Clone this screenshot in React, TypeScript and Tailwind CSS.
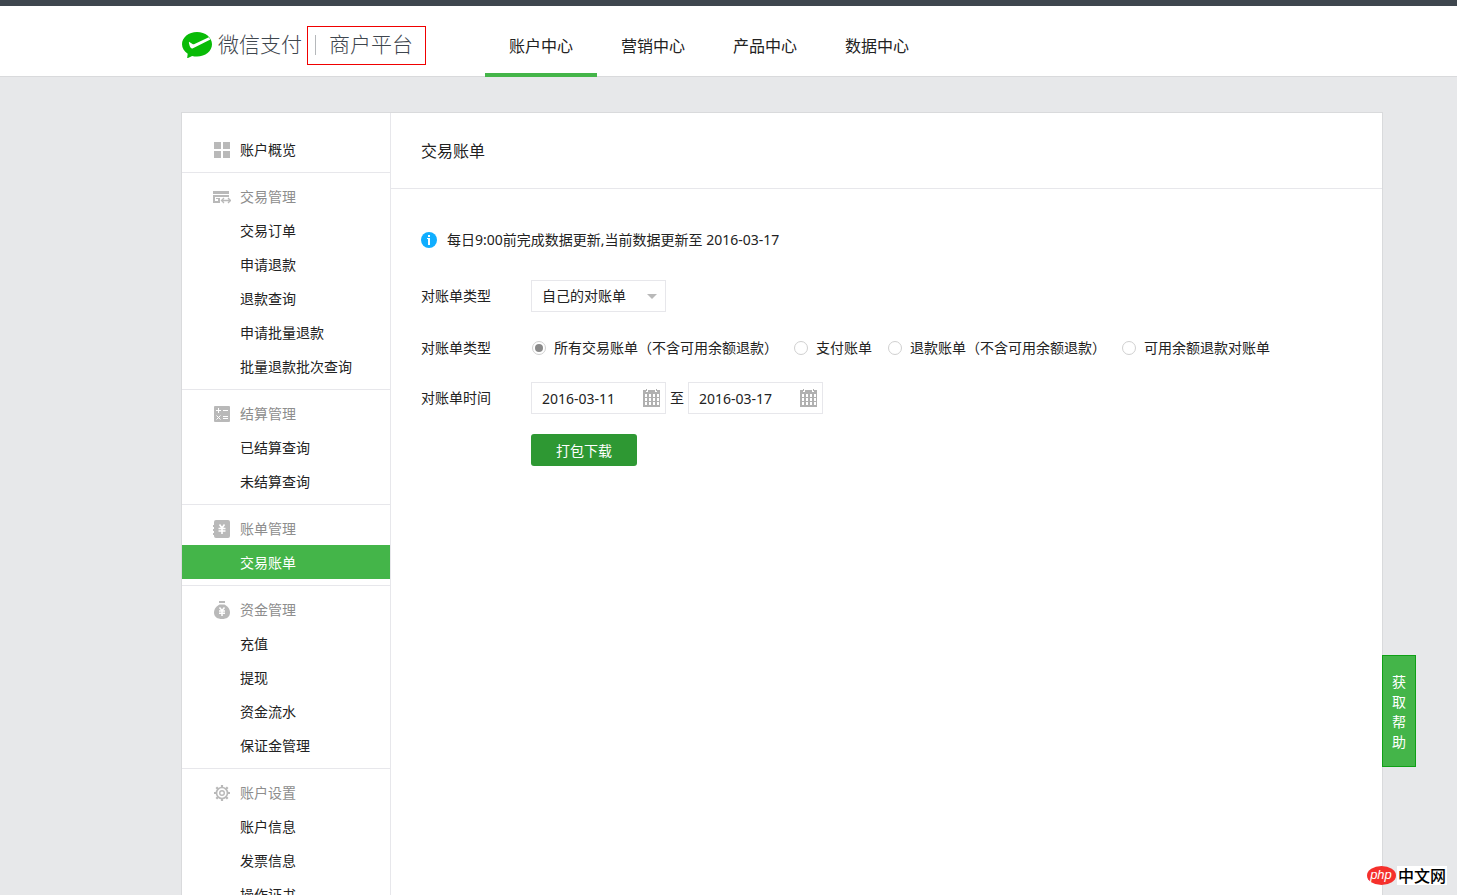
import { useState, type ReactElement } from "react";

type NavGroup = {
  title: string;
  icon: ReactElement;
  items: string[];
};

const TOP_NAV = ["账户中心", "营销中心", "产品中心", "数据中心"];

const BILL_TYPES = [
  "所有交易账单（不含可用余额退款）",
  "支付账单",
  "退款账单（不含可用余额退款）",
  "可用余额退款对账单",
];

function OverviewIcon() {
  return (
    <svg viewBox="0 0 18 18" className="size-[18px]" fill="#b9b9b9" shapeRendering="crispEdges">
      <path d="M1 1h7v7H1zM10 1h7v7h-7zM1 10h7v7H1zM10 10h7v7h-7z" />
    </svg>
  );
}

function TradeIcon() {
  return (
    <svg viewBox="0 0 18 18" className="size-[18px]" fill="#b9b9b9">
      <path d="M0 3h16v3H0zM0 7h16v2H0zM0 9h2v6H0zM2 13h5v2H2zM5 11h2v2H5zM3 10h4v1H3z" />
      <path
        d="M8.500 12.500h9M11 10l-2.500 2.500L11 15M15 10l2.500 2.500L15 15"
        fill="none"
        stroke="#b9b9b9"
        strokeWidth="1.300"
      />
    </svg>
  );
}

function SettleIcon() {
  return (
    <svg viewBox="0 0 18 18" className="size-[18px]">
      <rect x="1" y="1" width="16" height="16" rx="1" fill="#b9b9b9" />
      <path
        d="M3 5.500h5M5.500 3v5M10 5.500h5M10 11.500h5M10 13.500h5M3.500 10.500l4 4M7.500 10.500l-4 4"
        fill="none"
        stroke="#fff"
        strokeWidth="1"
      />
    </svg>
  );
}

function BillIcon() {
  return (
    <svg viewBox="0 0 18 18" className="size-[18px]">
      <path
        d="M3 0h12a2 2 0 0 1 2 2v14a2 2 0 0 1-2 2H3a2 2 0 0 1-2-2v-1H0v-2h1v-2H0V9h1V7H0V5h1V2a2 2 0 0 1 2-2z"
        fill="#b9b9b9"
      />
      <path d="M6.500 4.500 9 8l2.500-3.500M9 8v6M5.500 8.500h7M5.500 11h7" fill="none" stroke="#fff" strokeWidth="1.600" />
    </svg>
  );
}

function FundIcon() {
  return (
    <svg viewBox="0 0 18 18" className="size-[18px]">
      <path d="M6 0h6v2H6z" fill="#b9b9b9" />
      <path
        d="M6.500 3.500h5C14.500 5 17 8 17 11.500 17 16 13.500 18 9 18s-8-2-8-6.500C1 8 3.500 5 6.500 3.500z"
        fill="#b9b9b9"
      />
      <path d="M6.500 6.500 9 9.500l2.500-3M9 9.500V15M6 10h6M6 12.300h6" fill="none" stroke="#fff" strokeWidth="1.500" />
    </svg>
  );
}

function SettingsIcon() {
  return (
    <svg viewBox="0 0 18 18" className="size-[18px]" fill="none" stroke="#b9b9b9">
      <circle cx="9" cy="9" r="5.500" strokeWidth="1.700" />
      <circle cx="9" cy="9" r="2.300" strokeWidth="1.400" />
      <path
        d="M9 1v2.500M9 14.500V17M1 9h2.500M14.500 9H17M3.300 3.300l1.800 1.800M12.900 12.900l1.800 1.800M3.300 14.700l1.800-1.800M12.900 5.100l1.800-1.800"
        strokeWidth="2.200"
      />
    </svg>
  );
}

function CalendarIcon() {
  return (
    <svg
      viewBox="0 0 17 18"
      className="pointer-events-none absolute top-[7px] right-[6px] h-[18px] w-[17px]"
      shapeRendering="crispEdges"
    >
      <path d="M0 1h3v2h2V1h7v2h2V1h3v17H0z" fill="#b0b0b0" />
      <path d="M3 0h1v2H3zM13 0h1v2h-1z" fill="#b0b0b0" />
      <path
        d="M2 5h2v3H2zM6 5h2v3H6zM10 5h2v3h-2zM14 5h2v3h-2zM2 9h2v3H2zM6 9h2v3H6zM10 9h2v3h-2zM14 9h2v3h-2zM2 13h2v3H2zM6 13h2v3H6zM10 13h2v3h-2zM14 13h2v3h-2z"
        fill="#fff"
      />
    </svg>
  );
}

const NAV_GROUPS: NavGroup[] = [
  {
    title: "交易管理",
    icon: <TradeIcon />,
    items: ["交易订单", "申请退款", "退款查询", "申请批量退款", "批量退款批次查询"],
  },
  { title: "结算管理", icon: <SettleIcon />, items: ["已结算查询", "未结算查询"] },
  { title: "账单管理", icon: <BillIcon />, items: ["交易账单"] },
  { title: "资金管理", icon: <FundIcon />, items: ["充值", "提现", "资金流水", "保证金管理"] },
  { title: "账户设置", icon: <SettingsIcon />, items: ["账户信息", "发票信息", "操作证书"] },
];

function Header() {
  return (
    <header className="flex h-[77px] shrink-0 border-t-[6px] border-b border-t-[#3e464e] border-b-[#d9dadc] bg-white pl-[182px]">
      <a href="#" className="mt-5 flex h-[39px] w-[244px] shrink-0 text-[21px] leading-[34px] font-light text-[#3e464e]">
        <svg viewBox="0 0 30 26" className="mt-[6px] mr-[6px] h-[26px] w-[30px] shrink-0">
          <path
            d="M15 0c8.300 0 15 5.500 15 12.300S23.300 24.600 15 24.600c-1.700 0-3.400-.2-4.900-.7L5.600 26.200c-.3.100-.5-.1-.4-.4l.5-4C2.200 19.500 0 16.100 0 12.300 0 5.500 6.700 0 15 0z"
            fill="#09bb07"
          />
          <path
            d="M7 9.800c-.4.500.5 4.300 1.700 6 .6.900 1.500.9 2.300.5L28.400 7.400 26.800 5.200 12 12.200c-.5.200-1 .2-1.500-.1z"
            fill="#fff"
          />
        </svg>
        <span className="w-[89px] pt-px whitespace-nowrap">微信支付</span>
        <span className="flex flex-1 border border-[#f00000] pl-[7px] whitespace-nowrap">
          <i className="mt-2 mr-[13px] h-5 w-px bg-[#b5b8bb]" />
          商户平台
        </span>
      </a>
      <nav className="ml-[59px] flex">
        {TOP_NAV.map((label, index) => (
          <a
            key={label}
            href="#"
            className={[
              "-mb-px w-28 border-b-4 pt-5 text-center text-base leading-10",
              index === 0 ? "border-[#44b549]" : "border-transparent",
            ].join(" ")}
          >
            {label}
          </a>
        ))}
      </nav>
    </header>
  );
}

function Sidebar() {
  return (
    <nav className="w-[209px] shrink-0 border-r border-[#e7e7eb]">
      <a href="#" className="flex items-center gap-[9px] pt-5 pb-[5px] pl-[31px] leading-[34px]">
        <OverviewIcon />
        账户概览
      </a>
      {NAV_GROUPS.map((group) => (
        <section key={group.title} className="border-t border-[#e7e7eb] py-[6px] leading-8">
          <h3 className="flex items-center gap-[9px] pt-[2px] pl-[31px] text-[#8d8d8d]">
            {group.icon}
            {group.title}
          </h3>
          <ul>
            {group.items.map((item) => (
              <li key={item}>
                <a
                  href="#"
                  className={[
                    "block pt-[2px] pl-[58px]",
                    item === "交易账单" ? "bg-[#44b549] text-white" : "",
                  ].join(" ")}
                >
                  {item}
                </a>
              </li>
            ))}
          </ul>
        </section>
      ))}
    </nav>
  );
}

function BillForm() {
  const [billType, setBillType] = useState(BILL_TYPES[0]);

  return (
    <form className="px-[30px] pt-[41px]" onSubmit={(e) => e.preventDefault()}>
      <p className="flex h-5 items-center gap-[10px]">
        <svg viewBox="0 0 16 16" className="size-4">
          <circle cx="8" cy="8" r="8" fill="#10aeff" />
          <path d="M7 3h2v2H7zM6 6h3v7H7V7H6z" fill="#fff" />
        </svg>
        每日9:00前完成数据更新,当前数据更新至 2016-03-17
      </p>

      <div className="mt-[30px] flex h-8 items-center">
        <label htmlFor="owner" className="w-[110px] shrink-0">
          对账单类型
        </label>
        <div className="relative">
          <select
            id="owner"
            className="h-8 w-[135px] appearance-none border border-[#e7e7eb] bg-white pl-[10px] outline-none"
          >
            <option>自己的对账单</option>
          </select>
          <svg viewBox="0 0 10 5" className="pointer-events-none absolute top-[14px] right-[9px] h-[5px] w-[10px]">
            <path d="M0 0h10L5 5z" fill="#b9b9b9" />
          </svg>
        </div>
      </div>

      <fieldset className="mt-[26px] flex h-5 items-center">
        <legend className="float-left w-[110px] shrink-0">对账单类型</legend>
        <div className="flex flex-wrap gap-x-4 pl-px">
          {BILL_TYPES.map((type) => (
            <label key={type} className="flex items-center gap-2 whitespace-nowrap">
              <input
                type="radio"
                name="bill-type"
                checked={billType === type}
                onChange={() => setBillType(type)}
                className="size-[14px] appearance-none rounded-full border border-[#d0d0d0] bg-white bg-clip-content p-[2px] checked:bg-[#8a8a8a]"
              />
              {type}
            </label>
          ))}
        </div>
      </fieldset>

      <div className="mt-6 flex h-8 items-center">
        <label htmlFor="start" className="w-[110px] shrink-0">
          对账单时间
        </label>
        <div className="relative">
          <input
            id="start"
            type="text"
            defaultValue="2016-03-11"
            className="h-8 w-[135px] border border-[#e7e7eb] pl-[10px] outline-none"
          />
          <CalendarIcon />
        </div>
        <label htmlFor="end" className="px-1">
          至
        </label>
        <div className="relative">
          <input
            id="end"
            type="text"
            defaultValue="2016-03-17"
            className="h-8 w-[135px] border border-[#e7e7eb] pl-[10px] outline-none"
          />
          <CalendarIcon />
        </div>
      </div>

      <button type="submit" className="mt-5 ml-[110px] h-8 w-[106px] rounded-[3px] bg-[#2e9833] pt-px text-white">
        打包下载
      </button>
    </form>
  );
}

function SiteMark() {
  return (
    <div className="absolute right-[10px] bottom-[10px] flex h-[19px] items-center">
      <svg viewBox="0 0 30 19" className="h-[19px] w-[30px]">
        <ellipse cx="14.500" cy="9.500" rx="14.500" ry="9.500" fill="#f5302c" />
        <text
          x="14"
          y="13"
          textAnchor="middle"
          fill="#fff"
          fontSize="13"
          fontStyle="italic"
          fontFamily="Liberation Sans, sans-serif"
        >
          php
        </text>
      </svg>
      <span className="flex h-full items-center bg-white px-px text-base leading-none font-medium text-black">
        中文网
      </span>
    </div>
  );
}

export default function App() {
  return (
    <div className="relative flex h-screen flex-col overflow-hidden bg-[#e7e8ea] font-['Noto_Sans','Noto_Sans_CJK_SC',sans-serif] text-sm text-[#222]">
      <Header />
      <div className="mt-[35px] mr-[74px] ml-[181px] flex min-h-0 flex-1">
        <div className="relative flex w-full border border-b-0 border-[#d9dadc] bg-white">
          <Sidebar />
          <main className="min-w-0 flex-1">
            <h2 className="border-b border-[#e7e7eb] pt-px pl-[30px] text-base leading-[74px]">交易账单</h2>
            <BillForm />
          </main>
          <a
            href="#"
            className="absolute bottom-32 left-full w-[34px] border border-[#0fa016] bg-[#44b549] px-[9px] pt-4 pb-[14px] text-center leading-5 text-white"
          >
            获取帮助
          </a>
        </div>
      </div>
      <SiteMark />
    </div>
  );
}
